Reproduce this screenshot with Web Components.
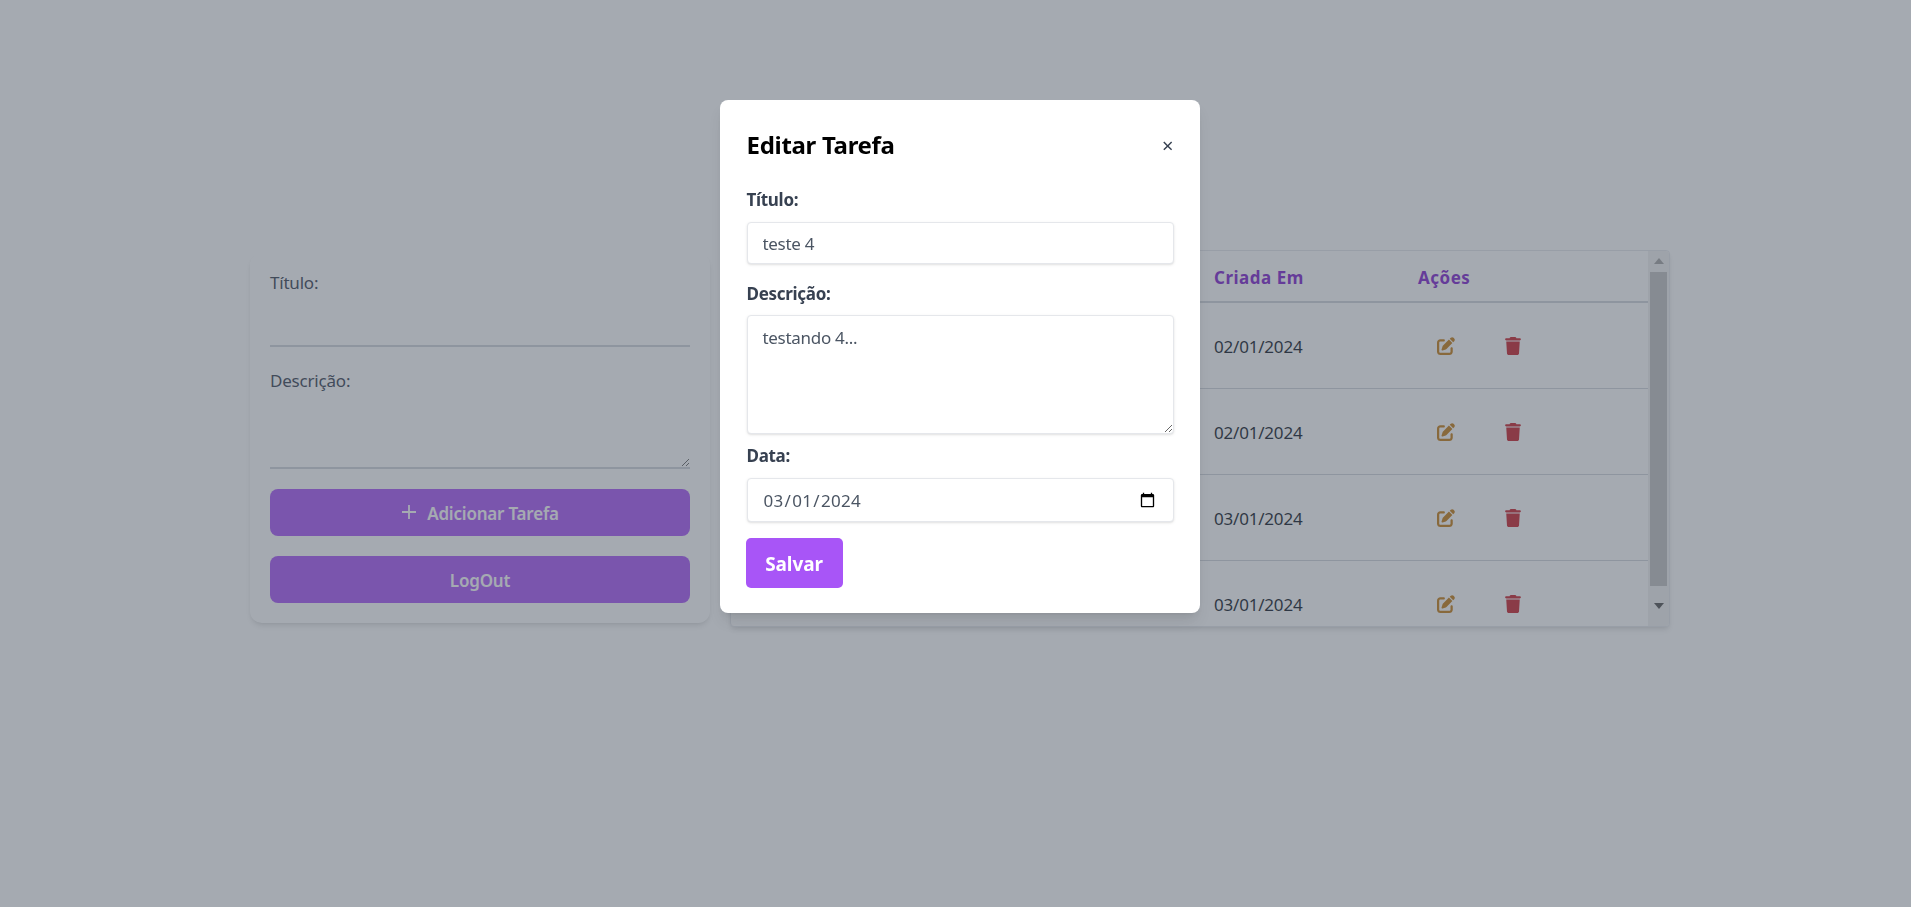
<!DOCTYPE html>
<html lang="pt-BR">
<head>
<meta charset="utf-8">
<title>Tarefas</title>
<style>
  html, body { margin: 0; height: 100%; background: #fff; }
  body { font-family: "Noto Sans", "Liberation Sans", sans-serif; overflow: hidden; }
</style>
</head>
<body>
<task-page>
  <task-form slot="form"></task-form>
  <task-table slot="table">
    <task-row date="02/01/2024"></task-row>
    <task-row date="02/01/2024"></task-row>
    <task-row date="03/01/2024"></task-row>
    <task-row date="03/01/2024"></task-row>
  </task-table>
</task-page>
<edit-modal></edit-modal>

<script>
const EDIT_ICON = `<svg viewBox="0 0 512 512" width="18" height="18" fill="currentColor"><path d="M471.6 21.7c-21.9-21.9-57.3-21.9-79.2 0L362.3 51.7l97.9 97.9 30.1-30.1c21.9-21.9 21.9-57.3 0-79.2L471.6 21.7zm-299.2 220c-6.1 6.1-10.8 13.6-13.5 21.9l-29.6 88.8c-2.9 8.6-.6 18.1 5.8 24.6s15.9 8.7 24.6 5.8l88.8-29.6c8.2-2.7 15.7-7.4 21.9-13.5L437.7 172.3 339.7 74.3 172.4 241.7zM96 64C43 64 0 107 0 160V416c0 53 43 96 96 96H352c53 0 96-43 96-96V320c0-17.7-14.3-32-32-32s-32 14.3-32 32v96c0 17.7-14.3 32-32 32H96c-17.7 0-32-14.3-32-32V160c0-17.7 14.3-32 32-32h96c17.7 0 32-14.3 32-32s-14.3-32-32-32H96z"/></svg>`;
const TRASH_ICON = `<svg viewBox="0 0 448 512" width="16" height="18" fill="currentColor"><path d="M135.2 17.7L128 32H32C14.3 32 0 46.3 0 64S14.3 96 32 96H416c17.7 0 32-14.3 32-32s-14.3-32-32-32H320l-7.2-14.3C307.4 6.8 296.3 0 284.2 0H163.8c-12.1 0-23.2 6.8-28.6 17.7zM416 128H32L53.2 467c1.6 25.3 22.6 45 47.9 45H346.9c25.3 0 46.3-19.7 47.9-45L416 128z"/></svg>`;

class TaskPage extends HTMLElement {
    connectedCallback() {
        this.attachShadow({ mode: 'open' });
        this.shadowRoot.innerHTML = `
            <style>
                :host{display:flex;gap:20px;align-items:flex-start;padding:250px 0 0 250px}
            </style>
            <slot name="form"></slot>
            <slot name="table"></slot>
        `;
    }
}

class TaskForm extends HTMLElement {
    connectedCallback() {
        this.attachShadow({ mode: 'open' });
        this.shadowRoot.innerHTML = `
            <style>
                :host{display:block;width:420px;margin-top:3px;padding:18px 20px 20px;background:#fff;border-radius:12px;box-shadow:0 4px 6px -1px rgba(0,0,0,.1),0 2px 4px -2px rgba(0,0,0,.1);font-size:17px;color:#374151}
                label{display:block;height:24px;line-height:24px;letter-spacing:-.2px}
                input,textarea{display:block;box-sizing:border-box;width:100%;border:0;border-bottom:2px solid #d1d5db;outline:0;background:transparent;padding:0;margin:0;font:inherit}
                input{height:52px;margin-bottom:22px}
                textarea{height:76px;margin-bottom:20px}
                button{display:flex;align-items:center;justify-content:center;gap:10px;width:100%;height:47px;border:0;border-radius:8px;background:#a855f7;color:#fff;font:600 17px "Noto Sans",sans-serif;letter-spacing:-.2px;padding:2px 0 0}
                button + button{margin-top:20px}
                svg{display:block;margin-top:-4px}
            </style>
            <label>Título:</label>
            <input type="text">
            <label>Descrição:</label>
            <textarea></textarea>
            <button type="button"><svg width="16" height="16" viewBox="0 0 16 16" fill="none" stroke="currentColor" stroke-width="1.8"><path d="M8 1v14M1 8h14"/></svg>Adicionar Tarefa</button>
            <button type="button">LogOut</button>
        `;
    }
}

class TaskTable extends HTMLElement {
    connectedCallback() {
        this.attachShadow({ mode: 'open' });
        this.shadowRoot.innerHTML = `
            <style>
                :host{display:flex;box-sizing:border-box;width:940px;height:377px;background:#fff;border:1px solid #e5e7eb;border-radius:4px;box-shadow:0 4px 6px -1px rgba(0,0,0,.1),0 2px 4px -2px rgba(0,0,0,.1);overflow:hidden}
                .body{flex:1;min-width:0;overflow:hidden}
                .head{display:grid;grid-template-columns:483px 204px 1fr;height:48px;padding-top:2px;align-items:center;border-bottom:2px solid #d1d5db;font-size:17px;font-weight:700;color:#7e22ce;letter-spacing:.5px}
                .bar{width:21px;display:flex;flex-direction:column;align-items:center;background:#f1f1f1}
                .bar .arrow{height:21px;display:flex;align-items:center;justify-content:center}
                .bar .up{color:#a3a3a3}
                .bar .thumb{width:17px;height:315px;background:#c1c1c1}
                .bar .down{height:40px;color:#505050}
            </style>
            <div class="body">
                <div class="head"><span></span><span>Criada Em</span><span>Ações</span></div>
                <slot></slot>
            </div>
            <div class="bar">
                <div class="arrow up"><svg width="10" height="6" viewBox="0 0 10 6" fill="currentColor"><path d="M5 0l5 6H0z"/></svg></div>
                <div class="thumb"></div>
                <div class="arrow down"><svg width="10" height="6" viewBox="0 0 10 6" fill="currentColor"><path d="M0 0h10L5 6z"/></svg></div>
            </div>
        `;
    }
}

class TaskRow extends HTMLElement {
    connectedCallback() {
        const date = this.getAttribute('date') || '';
        this.attachShadow({ mode: 'open' });
        this.shadowRoot.innerHTML = `
            <style>
                :host{display:grid;grid-template-columns:483px 204px 1fr;box-sizing:border-box;height:86px;align-items:center;border-bottom:1px solid #d1d5db;font-size:17px;color:#111827;letter-spacing:-.2px}
                .date{padding-top:1px}
                .actions{display:flex;align-items:center;padding-left:19px;gap:50px}
                .edit{color:#c57d15}
                .trash{color:#c8202a}
                svg{display:block}
            </style>
            <span></span>
            <span class="date">${date}</span>
            <div class="actions"><span class="edit">${EDIT_ICON}</span><span class="trash">${TRASH_ICON}</span></div>
        `;
    }
}

class EditModal extends HTMLElement {
    connectedCallback() {
        this.attachShadow({ mode: 'open' });
        this.shadowRoot.innerHTML = `
            <style>
                :host{position:fixed;inset:0;background:rgba(75,85,99,.5);display:flex;align-items:flex-start;padding:100px 0 0 720px;font-family:"Noto Sans",sans-serif}
                .modal{box-sizing:border-box;width:480px;height:513px;padding:19px 26.5px 0;background:#fff;border-radius:8px;box-shadow:0 10px 15px -3px rgba(0,0,0,.1),0 4px 6px -4px rgba(0,0,0,.1)}
                header{display:flex;justify-content:space-between;align-items:center;height:50px}
                h2{margin:0;font-size:24px;font-weight:700;color:#000;letter-spacing:-.3px}
                .close{font-size:20px;line-height:20px;color:#374151;margin-top:3px}
                label{display:block;height:24px;line-height:26px;margin-top:17px;font-size:17px;font-weight:700;color:#374151;letter-spacing:-.3px}
                input,textarea{display:block;box-sizing:border-box;width:100%;margin:0;border:1px solid #e5e7eb;border-radius:4px;background:#fff;box-shadow:0 1px 3px 0 rgba(0,0,0,.1),0 1px 2px -1px rgba(0,0,0,.1);outline:0;padding:0 15px;font:17px "Noto Sans",sans-serif;color:#4b5563;letter-spacing:-.3px}
                .first{margin-top:18px}
                input{height:42px;margin-top:11px}
                textarea{height:119px;margin-top:10px;padding-top:10px;line-height:24px}
                .data{margin-top:9px}
                input[type=date]{height:44px;letter-spacing:.3px}
                button{display:block;width:97px;height:50px;margin:16px 0 0 -1px;border:0;border-radius:5px;background:#a855f7;color:#fff;font:700 19px "Noto Sans",sans-serif;letter-spacing:-.1px;padding:1px 0 0}
            </style>
            <div class="modal">
                <header><h2>Editar Tarefa</h2><span class="close">×</span></header>
                <label class="first">Título:</label>
                <input type="text" value="teste 4">
                <label>Descrição:</label>
                <textarea>testando 4...</textarea>
                <label class="data">Data:</label>
                <input type="date" value="2024-03-01">
                <button type="button">Salvar</button>
            </div>
        `;
    }
}

customElements.define('task-page', TaskPage);
customElements.define('task-form', TaskForm);
customElements.define('task-table', TaskTable);
customElements.define('task-row', TaskRow);
customElements.define('edit-modal', EditModal);
</script>
</body>
</html>
